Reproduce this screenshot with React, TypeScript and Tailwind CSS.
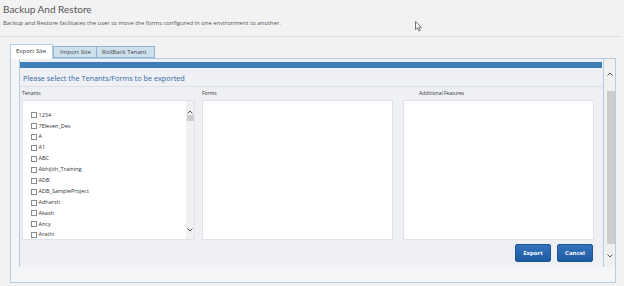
import React from "react";

const tenants = [
  "1234",
  "7Eleven_Dev",
  "A",
  "A1",
  "ABC",
  "Abhijith_Training",
  "ADB",
  "ADB_SampleProject",
  "Adharsh",
  "Akash",
  "Ancy",
  "Arathi",
];

function Chevron({ up }: { up?: boolean }) {
  return (
    <svg width="6" height="4" viewBox="0 0 6 4" className="block">
      <path
        d={up ? "M0.5 3.5 L3 1 L5.5 3.5" : "M0.5 0.5 L3 3 L5.5 0.5"}
        fill="none"
        stroke="#555"
        strokeWidth="1"
      />
    </svg>
  );
}

export default function App() {
  return (
    <div className="relative w-[624px] h-[286px] overflow-hidden bg-[#f2f2f2] font-['Open_Sans','Liberation_Sans',sans-serif] text-[#333]">
      {/* header */}
      <div className="pl-[3px] pt-[2px]">
        <h1 className="font-['Lato','Open_Sans',sans-serif] text-[10px] leading-[14px] text-[#555]">Backup And Restore</h1>
        <p className="mt-[3px] text-[5.9px] leading-[8px] text-[#555]">
          Backup and Restore facilitates the user to move the forms configured in one environment to another.
        </p>
      </div>
      <div className="mt-[9px] h-px w-[620px] bg-[#dcdcdc]" />

      {/* tabs */}
      <div className="ml-[10px] mt-[7px] w-[606px]">
        <div className="flex items-end h-[14px]">
          <div className="relative z-10 -mb-px h-[15px] w-[43px] border border-b-0 border-[#b3cde2] bg-white text-[6px] leading-[13px] pl-[5px] text-[#333]">
            Export Site
          </div>
          <div className="h-[12px] w-[44px] border border-[#8fb4d2] bg-[#cfe0ed] text-[6px] leading-[10px] pl-[6px] text-[#444]">
            Import Site
          </div>
          <div className="h-[12px] w-[58px] border border-l-0 border-[#8fb4d2] bg-[#cfe0ed] text-[6px] leading-[10px] pl-[5px] text-[#444]">
            RollBack Tenant
          </div>
        </div>

        {/* panel */}
        <div className="h-[225px] border border-[#b3cde2] bg-[#f4f5f7]">
          <div className="flex h-[208px] ml-[8px]">
            {/* inner box */}
            <div className="w-[585px] h-full overflow-hidden border-l border-r border-[#b3cde2] bg-[#eef0f4]">
              <div className="pt-[3px]">
                <div className="mr-[1px] h-[6px] bg-[#3f7db6]" />
                <div className="flex items-center h-[19px] pt-[2px] border-b border-[#dde0e6] pl-[3px] text-[7.3px] text-[#2e6aa8]">
                  Please select the Tenants/Forms to be exported
                </div>
                <div className="flex h-[13px] items-center text-[5px] text-[#333]">
                  <div className="w-[182px] pl-[2px]">Tenants</div>
                  <div className="w-[217px]">Forms</div>
                  <div>Additional Features</div>
                </div>
                <div className="flex pl-[2px]">
                  {/* tenants box */}
                  <div className="flex h-[140px] w-[173px] border border-[#dfe2e8] bg-white">
                    <div className="flex-1 overflow-hidden pt-[9px] pl-[8px]">
                      {tenants.map((t) => (
                        <div key={t} className="flex h-[10.9px] items-center gap-[1.5px]">
                          <span className="inline-block h-[6px] w-[6px] border border-[#8a8a8a] bg-white" />
                          <span className="text-[5.5px] leading-none text-[#333]">{t}</span>
                        </div>
                      ))}
                    </div>
                    <div className="flex w-[8px] flex-col items-center bg-[#f0f0f0]">
                      <div className="mt-[9px]">
                        <Chevron up />
                      </div>
                      <div className="mt-[1px] h-[6px] w-[7px] bg-[#cdcdcd]" />
                      <div className="flex-1" />
                      <div className="mb-[7px]">
                        <Chevron />
                      </div>
                    </div>
                  </div>
                  {/* forms box */}
                  <div className="ml-[7px] h-[140px] w-[191px] border border-[#dfe2e8] bg-white" />
                  {/* additional features box */}
                  <div className="ml-[10px] h-[140px] w-[191px] border border-[#dfe2e8] bg-white" />
                </div>
                <div className="mt-[4px] flex justify-end gap-[6px] pr-[10px]">
                  <button className="h-[18px] w-[36px] rounded-[2px] border border-[#1f5596] bg-gradient-to-b from-[#3573be] to-[#1f5ba3] text-[6px] font-bold text-white">
                    Export
                  </button>
                  <button className="h-[18px] w-[36px] rounded-[2px] border border-[#1f5596] bg-gradient-to-b from-[#3573be] to-[#1f5ba3] text-[6px] font-bold text-white">
                    Cancel
                  </button>
                </div>
              </div>
            </div>
            {/* outer scrollbar */}
            <div className="flex w-[11px] flex-col items-center bg-[#f0f0f0]">
              <div className="mt-[13px]">
                <Chevron up />
              </div>
              <div className="mt-[15px] h-[153px] w-[8px] ml-[3px] bg-[#cdcdcd]" />
              <div className="mt-[10px]">
                <Chevron />
              </div>
            </div>
          </div>
        </div>
      </div>

      {/* mouse cursor */}
      <svg className="absolute left-[415px] top-[21px]" width="8" height="11" viewBox="0 0 8 11">
        <path d="M0.5 0.5 L0.5 8.5 L2.5 6.8 L4 10 L5.3 9.4 L3.9 6.3 L6.5 6.3 Z" fill="white" stroke="#555" strokeWidth="0.8" />
      </svg>
    </div>
  );
}
